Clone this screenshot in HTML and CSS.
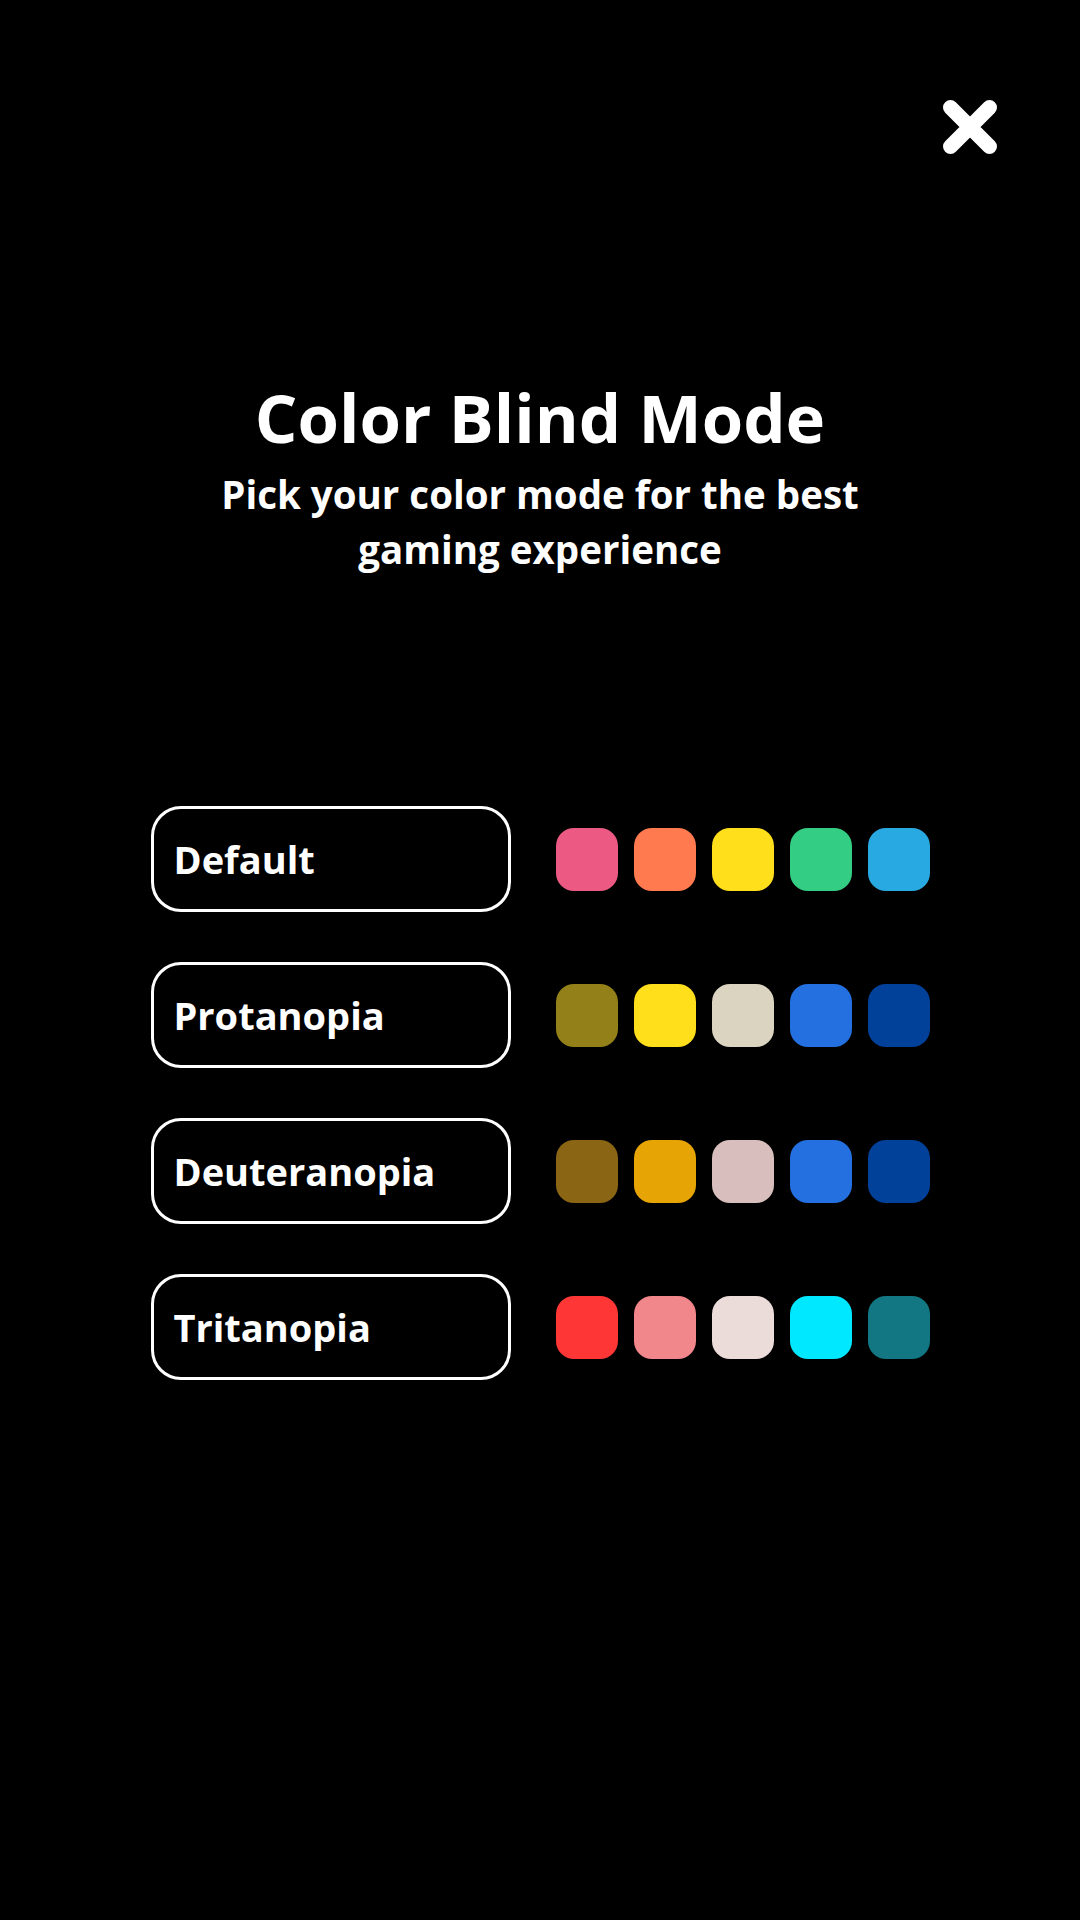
FILE: index.html
```html
<!DOCTYPE html>
<html lang="en">
<head>
  <meta charset="UTF-8">
  <meta name="viewport" content="width=device-width, initial-scale=1.0">
  <title>Color Blind Mode</title>
  <link rel="stylesheet" href="styles.css">
</head>
<body>
  <div class="screen">
    <!-- Close button -->
    <div class="top-bar">
      <button class="close-btn" aria-label="Close">
        <svg width="54" height="54" viewBox="0 0 54 54">
          <path d="M7.5 7.5 L46.5 46.5 M46.5 7.5 L7.5 46.5" stroke="#fff" stroke-width="15" stroke-linecap="round" fill="none"/>
        </svg>
      </button>
    </div>

    <!-- Heading -->
    <div class="intro">
      <h1>Color Blind Mode</h1>
      <p>Pick your color mode for the best<br>gaming experience</p>
    </div>

    <!-- Mode options -->
    <div class="mode-list">
      <div class="mode-row">
        <button class="mode-btn">Default</button>
        <div class="swatches">
          <span class="swatch pink"></span>
          <span class="swatch orange"></span>
          <span class="swatch yellow"></span>
          <span class="swatch green"></span>
          <span class="swatch sky"></span>
        </div>
      </div>
      <div class="mode-row">
        <button class="mode-btn">Protanopia</button>
        <div class="swatches">
          <span class="swatch olive"></span>
          <span class="swatch yellow"></span>
          <span class="swatch beige"></span>
          <span class="swatch blue"></span>
          <span class="swatch navy"></span>
        </div>
      </div>
      <div class="mode-row">
        <button class="mode-btn">Deuteranopia</button>
        <div class="swatches">
          <span class="swatch brown"></span>
          <span class="swatch amber"></span>
          <span class="swatch rose"></span>
          <span class="swatch blue"></span>
          <span class="swatch navy"></span>
        </div>
      </div>
      <div class="mode-row">
        <button class="mode-btn">Tritanopia</button>
        <div class="swatches">
          <span class="swatch red"></span>
          <span class="swatch salmon"></span>
          <span class="swatch blush"></span>
          <span class="swatch cyan"></span>
          <span class="swatch teal"></span>
        </div>
      </div>
    </div>
  </div>
</body>
</html>
```

FILE: styles.css
```css
body {
  margin: 0;
  background-color: #000;
  color: #fff;
  font-family: "Open Sans", Lato, sans-serif;
}

.screen {
  width: 1080px;
  height: 1920px;
  overflow: hidden;
}

.top-bar {
  display: flex;
  justify-content: flex-end;
  padding: 100px 83px 0 0;
}

.close-btn {
  background: none;
  border: none;
  padding: 0;
  width: 54px;
  height: 54px;
  cursor: pointer;
}

.close-btn svg {
  display: block;
}

.intro {
  text-align: center;
  margin-top: 223px;
}

.intro h1 {
  margin: 0;
  font-size: 67px;
  font-weight: 700;
  line-height: 80px;
}

.intro p {
  margin: 10px 0 0;
  font-size: 38.5px;
  font-weight: 700;
  line-height: 55px;
}

.mode-list {
  display: flex;
  flex-direction: column;
  align-items: center;
  gap: 50px;
  margin-top: 229px;
}

.mode-row {
  display: flex;
  align-items: center;
  gap: 45px;
}

.mode-btn {
  width: 360px;
  height: 106px;
  box-sizing: border-box;
  background: #000;
  color: #fff;
  border: 3px solid #fff;
  border-radius: 30px;
  padding: 0 0 0 20px;
  text-align: left;
  font-family: "Open Sans", Lato, sans-serif;
  font-size: 38px;
  font-weight: 700;
  cursor: pointer;
}

.swatches {
  display: flex;
  gap: 16px;
}

.swatch {
  width: 62px;
  height: 63px;
  border-radius: 18px;
}

.pink   { background-color: #ec5a84; }
.orange { background-color: #ff7b4f; }
.yellow { background-color: #ffdf1b; }
.green  { background-color: #33ce83; }
.sky    { background-color: #29a9e1; }
.olive  { background-color: #938019; }
.beige  { background-color: #dad4c0; }
.blue   { background-color: #2470e0; }
.navy   { background-color: #024199; }
.brown  { background-color: #8a6513; }
.amber  { background-color: #e7a505; }
.rose   { background-color: #d8bfbd; }
.red    { background-color: #ff3636; }
.salmon { background-color: #f2878b; }
.blush  { background-color: #ebdcda; }
.cyan   { background-color: #00e8ff; }
.teal   { background-color: #127783; }
```
